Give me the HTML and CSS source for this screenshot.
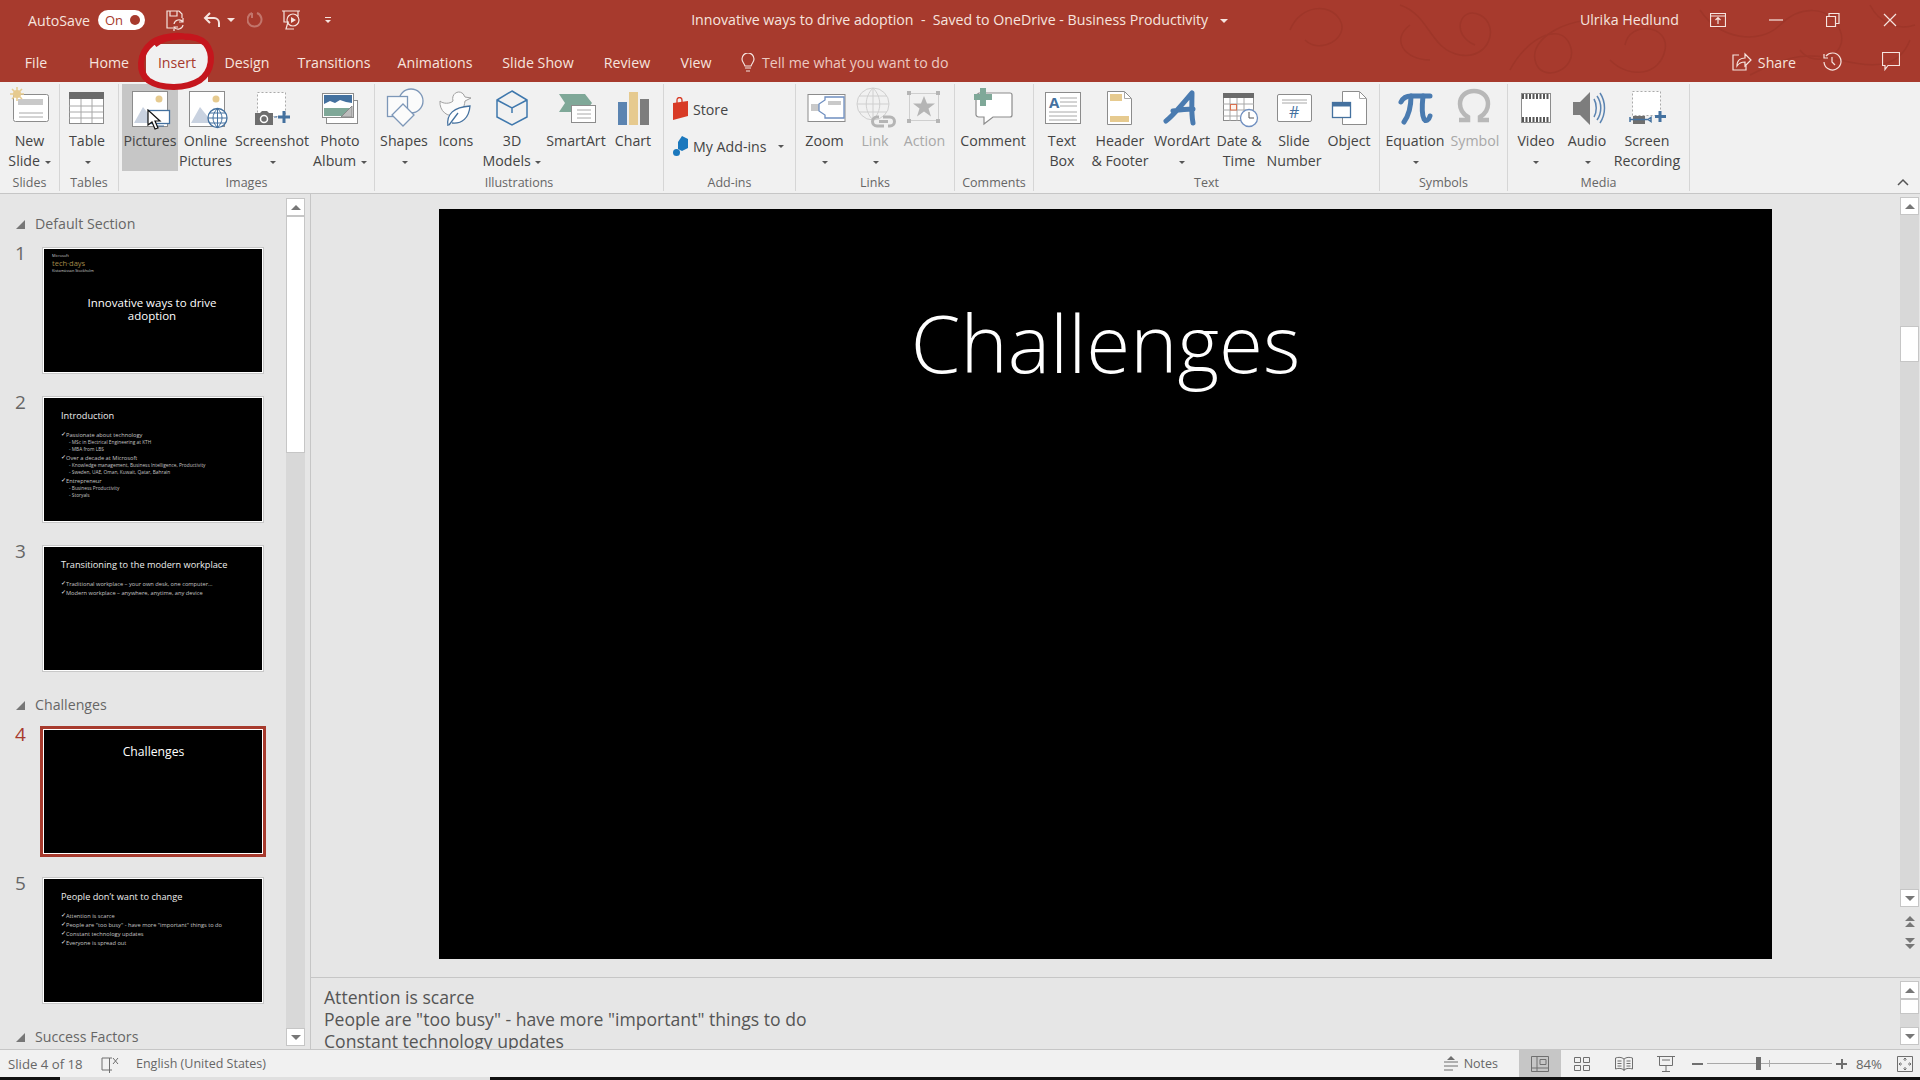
FILE: index.html
```html
<!DOCTYPE html>
<html lang="en">

<head>
  <meta charset="UTF-8" />
  <title>Innovative ways to drive adoption - PowerPoint</title>
  <link rel="stylesheet" href="styles.css">
</head>

<body>
  <header class="titlebar">
    <svg class="pattern" width="640" height="82" viewBox="0 0 640 82">
      <path d="M10 30c10-25 40-28 50-10s-20 35-35 20M120 5c30 10 30 45 60 50s40-30 20-40-30 20-5 30M150 60c-25 0-40-20-20-35M230 70c15-30 50-50 60-25s-30 40-35 15 40-45 75-40M330 60c20 20 50 15 55-10s-35-30-40-5M420 10c20 30 60 35 80 15s50-20 60 5-25 40-40 20M470 75c30-15 50-25 90-15s60 5 70-20M590 5c10 20 30 25 45 20" />
    </svg>
    <div class="title-row">
      <div class="qat">
        <span class="autosave">AutoSave</span>
        <span class="toggle">On<i></i></span>
        <svg class="qat-save" width="20" height="22" viewBox="0 0 20 22"><path d="M14 2H2v17h6M14 2l3 3v4M5 2v5h7V2" /><path d="M9 15a5 5 0 0 1 9-2M18 16a5 5 0 0 1-9 2M18 9v4h-4M9 22v-4h4" /></svg>
        <svg class="qat-undo" width="18" height="18" viewBox="0 0 18 18"><path class="thick" d="M7 2 2 7l5 5M2 7h9a5 5 0 0 1 5 5v4" /></svg>
        <span class="caret-w"></span>
        <svg class="qat-redo" width="16" height="18" viewBox="0 0 16 18"><path class="thick" d="M10 2a7 7 0 1 1-5 0M5 2v5" /></svg>
        <svg class="qat-show" width="20" height="22" viewBox="0 0 20 22"><path d="M1 2h18M3 2v11h5M7 13l-2 7h8M13 2h4v5" /><circle cx="12" cy="11" r="6" /><path class="fill" d="m10 8 5 3-5 3z" /></svg>
        <span class="qat-more"></span>
      </div>
      <div class="doc-title">Innovative ways to drive adoption &nbsp;-&nbsp; Saved to OneDrive - Business Productivity <span class="caret-w"></span></div>
      <div class="win">
        <span class="user">Ulrika Hedlund</span>
        <svg width="16" height="14" viewBox="0 0 16 14"><path d="M.5.5h15v13H.5zM.5 3h15M8 11V5M5.500 7 8 4.500 10.500 7" /></svg>
        <svg width="14" height="14" viewBox="0 0 14 14"><path d="M0 7h14" /></svg>
        <svg width="14" height="14" viewBox="0 0 14 14"><path d="M.5 3.500h9v10h-9zM3 3.500V.5h10v10h-3.500" /></svg>
        <svg width="14" height="14" viewBox="0 0 14 14"><path d="m1 1 12 12M13 1 1 13" /></svg>
      </div>
    </div>
    <nav class="tabs">
      <span class="tab">File</span>
      <span class="tab">Home</span>
      <span class="tab active">Insert</span>
      <span class="tab">Design</span>
      <span class="tab">Transitions</span>
      <span class="tab">Animations</span>
      <span class="tab">Slide Show</span>
      <span class="tab">Review</span>
      <span class="tab">View</span>
      <span class="tell">
        <svg width="14" height="20" viewBox="0 0 14 20"><path d="M4 13C3 10 1 9 1 6a6 6 0 0 1 12 0c0 3-2 4-3 7zM4 15h6M5 18h4" /></svg>
        Tell me what you want to do
      </span>
      <span class="tabs-right">
        <svg width="20" height="20" viewBox="0 0 20 20"><path d="M7 4H1v15h13v-5M5 15c0-6 4-8 8-8V3l6 6-6 6v-4c-3 0-6 1-8 4z" /></svg>
        <span class="share">Share</span>
        <svg class="hist" width="19" height="19" viewBox="0 0 19 19"><path d="M3 4a8.500 8.500 0 1 1-2 6M1 2v4h4M9 5v5l3 3" /></svg>
        <svg class="chat" width="18" height="19" viewBox="0 0 18 19"><path d="M.5.5h17v13H6l-3 4v-4H.5z" /></svg>
      </span>
    </nav>
  </header>

  <section class="ribbon">
    <div class="group g-slides">
      <div class="tools">
        <div class="tool">
          <svg class="icon" viewBox="0 0 44 46"><rect class="sheet" x="5.500" y="10.500" width="35" height="27" rx="2" /><rect class="grey" x="10" y="15" width="25" height="6" /><path class="ln" d="M11 29h24M11 33h24" /><path class="sun" d="M9 3v14M2 10h14M4 5l10 10M14 5 4 15" /><circle class="gold" cx="9" cy="10" r="4" /></svg>
          <span class="label">New<br>Slide <i class="caret"></i></span>
        </div>
      </div>
      <div class="group-name">Slides</div>
    </div>
    <div class="group g-tables">
      <div class="tools">
        <div class="tool">
          <svg class="icon" viewBox="0 0 44 46"><rect class="sheet" x="4.500" y="8.500" width="34" height="31" /><rect class="dark" x="4" y="8" width="35" height="7" /><path class="ln" d="M4 22h34M4 28h34M4 34h34M16 15v24M27 15v24" /></svg>
          <span class="label">Table<br><i class="caret"></i></span>
        </div>
      </div>
      <div class="group-name">Tables</div>
    </div>
    <div class="group g-images">
      <div class="tools">
        <div class="tool pressed">
          <svg class="icon" viewBox="0 0 44 46"><rect class="sheet" x="4.500" y="7.500" width="35" height="35" /><circle class="gold" cx="31" cy="15" r="3.500" /><path class="mount" d="m6 39 9-16 8 10 5 6z" /><rect class="sheet-b" x="20.500" y="26.500" width="21" height="13" /><path class="blue" d="M27 42h9" /></svg>
          <span class="label">Pictures</span>
        </div>
        <div class="tool">
          <svg class="icon" viewBox="0 0 44 46"><rect class="sheet" x="5.500" y="7.500" width="35" height="35" /><circle class="gold" cx="32" cy="15" r="3.500" /><path class="mount" d="m7 39 9-16 8 10 5 6z" /><circle class="sheet-b" cx="33.500" cy="34" r="9.500" /><path class="blue" d="M24 34h19M33.500 24.500v19M25.500 29h16M25.500 39h16M33.500 24.500c-6 6-6 13 0 19M33.500 24.500c6 6 6 13 0 19" /></svg>
          <span class="label">Online<br>Pictures</span>
        </div>
        <div class="tool">
          <svg class="icon" viewBox="0 0 44 46"><rect class="dash" x="7.500" y="8.500" width="28" height="24" /><path class="cam" d="M5 29h5l2-2h5l2 2h4v12H5z" /><circle class="lens" cx="14" cy="35" r="3.500" /><path class="blue-b" d="M34 27v12M28 33h12" /><path class="blue" d="M24 33h3" /></svg>
          <span class="label">Screenshot<br><i class="caret"></i></span>
        </div>
        <div class="tool">
          <svg class="icon" viewBox="0 0 44 46"><rect class="sheet" x="8.500" y="16.500" width="31" height="23" /><rect class="sheet" x="4.500" y="9.500" width="31" height="24" /><rect class="sky" x="6" y="11" width="28" height="14" /><path class="cloud" d="m6 20 6-3 5 2 5-3 6 2 6 1v5H6z" /><rect class="sea" x="6" y="24" width="28" height="8" /><path class="curl" d="M34 22 23 33h11z" /></svg>
          <span class="label">Photo<br>Album <i class="caret"></i></span>
        </div>
      </div>
      <div class="group-name">Images</div>
    </div>
    <div class="group g-illus">
      <div class="tools">
        <div class="tool">
          <svg class="icon" viewBox="0 0 44 46"><circle class="sheet-s" cx="29" cy="17" r="12" /><rect class="sheet-s" x="5.500" y="12.500" width="20" height="20" /><path class="sheet-s" d="m21 20 11 11-11 11-11-11z" /></svg>
          <span class="label">Shapes<br><i class="caret"></i></span>
        </div>
        <div class="tool">
          <svg class="icon" viewBox="0 0 44 46"><path class="sheet-g" d="M6 17c3 3 10 3 13 0-2-7 5-11 9-8 2 1 2 3 3 4l6 1-6 3c-1 7-3 12-9 14-8 3-17-4-16-14z" /><path class="sheet-b" d="M14 42c-2-12 6-19 22-20-1 12-8 18-18 17M24 29l-9 12" /></svg>
          <span class="label">Icons</span>
        </div>
        <div class="tool">
          <svg class="icon" viewBox="0 0 44 46"><path class="cube" d="m22 7 15 9v17l-15 8-15-8V16zM7 16l15 8 15-8M22 24v5" /></svg>
          <span class="label">3D<br>Models <i class="caret"></i></span>
        </div>
        <div class="tool">
          <svg class="icon" viewBox="0 0 44 46"><path class="green" d="M5 10h26l7 9-7 9H5l6-9z" /><rect class="sheet" x="17.500" y="21.500" width="24" height="17" /><path class="ln" d="M23 26h14M23 30h14M23 34h14" /></svg>
          <span class="label">SmartArt</span>
        </div>
        <div class="tool">
          <svg class="icon" viewBox="0 0 44 46"><rect class="bar-b" x="7" y="18" width="9" height="23" /><rect class="gold" x="18" y="8" width="9" height="33" /><rect class="bar-g" x="29" y="15" width="9" height="26" /></svg>
          <span class="label">Chart</span>
        </div>
      </div>
      <div class="group-name">Illustrations</div>
    </div>
    <div class="group g-addins">
      <div class="addins">
        <div class="addin">
          <svg width="17" height="24" viewBox="0 0 17 24"><path class="store" d="m1 6 15-2v15L1 23z" /><path class="store-h" d="M5 7V3a2.500 2.500 0 0 1 5 0v3" /></svg>
          Store
        </div>
        <div class="addin">
          <svg width="17" height="24" viewBox="0 0 17 24"><path class="hex" d="m10 2 6 3v9l-6 3-4-2V8z" /><circle class="hex" cx="4.500" cy="18.500" r="3.500" /></svg>
          My Add-ins <i class="caret"></i>
        </div>
      </div>
      <div class="group-name">Add-ins</div>
    </div>
    <div class="group g-links">
      <div class="tools">
        <div class="tool">
          <svg class="icon" viewBox="0 0 44 46"><rect class="sheet" x="5" y="10.500" width="37" height="27" /><rect class="grey" x="8" y="20" width="8" height="7" /><path class="sheet-bl" d="M16 20l6-4v-3h19v21H22v-3l-6-4z" /><rect class="grey" x="25" y="17" width="13" height="4" /></svg>
          <span class="label">Zoom<br><i class="caret"></i></span>
        </div>
        <div class="tool off">
          <svg class="icon" viewBox="0 0 44 46"><circle class="faint" cx="20" cy="20" r="16" /><path class="faint" d="M4 20h32M20 4v32M6 12h28M6 28h28M20 4c-9 9-9 23 0 32M20 4c9 9 9 23 0 32" /><path class="chain" d="M26 33h-2a4 4 0 0 0 0 9h7M30 33h7a4 4 0 0 1 0 9h-2M26 37.500h9" /></svg>
          <span class="label">Link<br><i class="caret"></i></span>
        </div>
        <div class="tool off">
          <svg class="icon" viewBox="0 0 44 46"><rect class="faint" x="6.500" y="9.500" width="29" height="27" /><path class="star" d="m21 12 3 7.500h8l-6.500 5 2.500 8-7-5-7 5 2.500-8-6.500-5h8z" /><path class="star" d="M4 7h4v4H4zM33 7h4v4h-4zM4 35h4v4H4zM33 35h4v4h-4z" /></svg>
          <span class="label">Action</span>
        </div>
      </div>
      <div class="group-name">Links</div>
    </div>
    <div class="group g-comments">
      <div class="tools">
        <div class="tool">
          <svg class="icon" viewBox="0 0 44 46"><path class="sheet-bub" d="M8 9h31a2 2 0 0 1 2 2v20a2 2 0 0 1-2 2H22l-9 7v-7H8a3 3 0 0 1-3-2V11z" /><path class="plus-g" d="M12 4v18M3 13h18" /></svg>
          <span class="label">Comment</span>
        </div>
      </div>
      <div class="group-name">Comments</div>
    </div>
    <div class="group g-text">
      <div class="tools">
        <div class="tool">
          <svg class="icon" viewBox="0 0 44 46"><rect class="sheet" x="5.500" y="8.500" width="35" height="31" /><text class="ic-a" x="9" y="24">A</text><path class="ln" d="M20 14h17M20 18h17M20 22h17M9 28h28M9 32h28M9 36h28" /></svg>
          <span class="label">Text<br>Box</span>
        </div>
        <div class="tool">
          <svg class="icon" viewBox="0 0 44 46"><path class="sheet" d="M9.500 7.500h17l7 7v26h-24z" /><path class="ln" d="M26.500 7.500v7h7" /><rect class="gold" x="12" y="10" width="12" height="7" /><rect class="gold" x="12" y="32" width="19" height="6" /></svg>
          <span class="label">Header<br>&amp; Footer</span>
        </div>
        <div class="tool">
          <svg class="icon" viewBox="0 0 44 46"><path class="pic-word" d="M6 37c6-4 14-14 26-28 0 10-1 20 1 30M13 27c6-1 13-2 20-2" /></svg>
          <span class="label">WordArt<br><i class="caret"></i></span>
        </div>
        <div class="tool">
          <svg class="icon" viewBox="0 0 44 46"><rect class="sheet" x="6.500" y="9.500" width="30" height="27" /><rect class="dark" x="6" y="9" width="31" height="5" /><path class="ln" d="M6 20h31M6 26h31M6 32h31M13 14v23M20 14v23M27 14v23" /><rect class="redbox" x="13.500" y="20.500" width="6" height="5.500" /><circle class="sheet-bl" cx="32" cy="34" r="8.500" /><path class="dk" d="M32 28v6h5" /></svg>
          <span class="label">Date &amp;<br>Time</span>
        </div>
        <div class="tool">
          <svg class="icon" viewBox="0 0 44 46"><rect class="sheet" x="5.500" y="10.500" width="34" height="27" rx="1.500" /><path class="ln" d="M10 16h25M10 19h25" /><text class="ic-hash" x="17" y="34">#</text></svg>
          <span class="label">Slide<br>Number</span>
        </div>
        <div class="tool">
          <svg class="icon" viewBox="0 0 44 46"><path class="sheet" d="M15.500 7.500h17l7 7v26h-24z" /><path class="ln" d="M32.500 7.500v7h7" /><rect class="win-bl" x="5.500" y="18.500" width="18" height="15" /><path class="win-bar" d="M5 20.500h19" /></svg>
          <span class="label">Object</span>
        </div>
      </div>
      <div class="group-name">Text</div>
    </div>
    <div class="group g-symbols">
      <div class="tools">
        <div class="tool">
          <svg class="icon" viewBox="0 0 44 46"><path class="pic-pi" d="M8 18c2-4 6-6 10-6h19" /><path class="pic-pi" d="M18 12c0 10-2 19-7 26M30 12c-1 9-1 19 1 23 2 3 5 1 6-3" /></svg>
          <span class="label">Equation<br><i class="caret"></i></span>
        </div>
        <div class="tool off">
          <svg class="icon" viewBox="0 0 44 46"><path class="pic-om" d="M6 36h9v-3c-5-3-8-8-8-13 0-8 6-13 14-13s14 5 14 13c0 5-3 10-8 13v3h9" /></svg>
          <span class="label">Symbol</span>
        </div>
      </div>
      <div class="group-name">Symbols</div>
    </div>
    <div class="group g-media">
      <div class="tools">
        <div class="tool">
          <svg class="icon" viewBox="0 0 44 46"><rect class="sheet" x="7.500" y="9.500" width="29" height="29" /><path class="film" d="M8 12.500h28M8 35.500h28" /></svg>
          <span class="label">Video<br><i class="caret"></i></span>
        </div>
        <div class="tool">
          <svg class="icon" viewBox="0 0 44 46"><path class="bar-g" d="M8 18h7l10-10v33L15 31H8z" /><path class="arc" d="M29 15c3 5 3 13 0 18M32 12c5 7 5 17 0 24M35 9c6 9 6 21 0 30" /></svg>
          <span class="label">Audio<br><i class="caret"></i></span>
        </div>
        <div class="tool">
          <svg class="icon" viewBox="0 0 44 46"><rect class="dash" x="7.500" y="7.500" width="28" height="24" /><path class="cam" d="M8 32h12v8H8z" /><path class="blue-c" d="M5 33v5M5 35.500h18l3-2v4l-3-2" /><path class="blue-b" d="M35 27v11M30 32.500h11" /></svg>
          <span class="label">Screen<br>Recording</span>
        </div>
      </div>
      <div class="group-name">Media</div>
    </div>
    <svg class="collapse" width="12" height="8" viewBox="0 0 12 8"><path d="m1 7 5-5 5 5" /></svg>
  </section>

  <!-- the red mark drawn over the Insert tab -->
  <svg class="ring" width="82" height="62" viewBox="0 0 80 60"><path d="M18 13C30 3 58 2 68 12c8 10 7 27-6 36-14 9-38 8-50 0C2 40 2 22 16 11c8-6 26-8 34-5" /></svg>
  <svg class="cursor" width="15" height="21" viewBox="0 0 15 21"><path d="M1 1v15l4-3 3 7 3-1-3-7h5z" /></svg>

  <main class="workspace">
    <aside class="panel">
      <div class="slides-list">
        <div class="sec-head">Default Section</div>
        <div class="sec">
          <div class="row">
            <span class="num">1</span>
            <div class="thumb th-cover">
              <div class="ms">Microsoft</div>
              <div class="td">tech·days</div>
              <div class="ms">Kistamässan Stockholm</div>
              <div class="cover-title">Innovative ways to drive<br>adoption</div>
            </div>
          </div>
          <div class="row">
            <span class="num">2</span>
            <div class="thumb th-list">
              <div class="th-title">Introduction</div>
              <ul class="bl">
                <li>Passionate about technology</li>
                <li class="sub">- MSc in Electrical Engineering at KTH</li>
                <li class="sub">- MBA from LBS</li>
                <li class="next">Over a decade at Microsoft</li>
                <li class="sub">- Knowledge management, Business Intelligence, Productivity</li>
                <li class="sub">- Sweden, UAE, Oman, Kuwait, Qatar, Bahrain</li>
                <li class="next">Entrepreneur</li>
                <li class="sub">- Business Productivity</li>
                <li class="sub">- Storyals</li>
              </ul>
            </div>
          </div>
          <div class="row">
            <span class="num">3</span>
            <div class="thumb th-list">
              <div class="th-title">Transitioning to the modern workplace</div>
              <ul class="bl wide">
                <li>Traditional workplace – your own desk, one computer...</li>
                <li>Modern workplace – anywhere, anytime, any device</li>
              </ul>
            </div>
          </div>
        </div>
        <div class="sec-head">Challenges</div>
        <div class="sec">
          <div class="row current">
            <span class="num">4</span>
            <div class="thumb th-center">Challenges</div>
          </div>
          <div class="row">
            <span class="num">5</span>
            <div class="thumb th-list">
              <div class="th-title">People don’t want to change</div>
              <ul class="bl wide">
                <li>Attention is scarce</li>
                <li>People are "too busy" - have more "important" things to do</li>
                <li>Constant technology updates</li>
                <li>Everyone is spread out</li>
              </ul>
            </div>
          </div>
        </div>
        <div class="sec-head">Success Factors</div>
      </div>
      <div class="sb sb-list">
        <span class="sb-btn up"></span>
        <div class="sb-track"><div class="sb-thumb"></div></div>
        <span class="sb-btn down"></span>
      </div>
    </aside>

    <div class="center">
      <div class="editor">
        <div class="canvas">
          <div class="slide">Challenges</div>
        </div>
        <div class="sb sb-main">
          <span class="sb-btn up"></span>
          <div class="sb-track"><div class="sb-thumb"></div></div>
          <span class="sb-btn down"></span>
          <svg class="dbl" width="12" height="12" viewBox="0 0 12 12"><path d="m6 0 5 5H1zM6 6l5 5H1z" /></svg>
          <svg class="dbl" width="12" height="12" viewBox="0 0 12 12"><path d="m1 1h10L6 6zM1 7h10l-5 5z" /></svg>
        </div>
      </div>
      <div class="notes">
        <div class="notes-text">
          Attention is scarce<br>
          People are "too busy" - have more "important" things to do<br>
          Constant technology updates
        </div>
        <div class="sb sb-notes">
          <span class="sb-btn up"></span>
          <div class="sb-track"><div class="sb-thumb"></div></div>
          <span class="sb-btn down"></span>
        </div>
      </div>
    </div>
  </main>

  <footer class="status">
    <span class="st-slide">Slide 4 of 18</span>
    <svg class="st-book" width="18" height="18" viewBox="0 0 18 18"><path d="M8.500 3H1v12h7.500zM8.500 3v15M8.500 15H11M8.500 3H11M12 3l5 6M17 3l-5 6" /></svg>
    <span class="st-lang">English (United States)</span>
    <span class="st-right">
      <svg class="st-notes" width="14" height="15" viewBox="0 0 14 15"><path class="st-f" d="m7 0 4 4H3z" /><path d="M0 6h14M0 10h14M0 14h9" /></svg>
      <span class="st-notes-t">Notes</span>
      <span class="view on"><svg width="18" height="16" viewBox="0 0 18 16"><path d="M.5.5h17v15H.5zM6 .5v15M.5 12h17M9 3.500h6v5H9z" /></svg></span>
      <span class="view"><svg width="18" height="16" viewBox="0 0 18 16"><path d="M1.500 1.500h6v5h-6zM10.500 1.500h6v5h-6zM1.500 9.500h6v5h-6zM10.500 9.500h6v5h-6z" /></svg></span>
      <span class="view"><svg width="18" height="16" viewBox="0 0 18 16"><path d="M.5 2c3-1 6-1 8.500 1 2.500-2 5.500-2 8.500-1v11c-3-1-6-1-8.500 1-2.500-2-5.500-2-8.500-1zM9 3v12M2.500 5h4M2.500 7.500h4M2.500 10h4M11.500 5h4M11.500 7.500h4M11.500 10h4" /></svg></span>
      <span class="view"><svg width="18" height="16" viewBox="0 0 18 16"><path d="M0 .5h18M2.500.5v9h13v-9M9 9.500V15M5 15.500h8M5 4h8" /></svg></span>
      <span class="zoom-minus"></span>
      <span class="slider"><i class="tick"></i><i class="knob"></i></span>
      <span class="zoom-plus"></span>
      <span class="st-pct">84%</span>
      <svg class="st-fit" width="16" height="16" viewBox="0 0 16 16"><path d="M.5.5h15v15H.5zM8 2v3M8 11v3M2 8h3M11 8h3M6.500 3.500 8 2l1.500 1.500M6.500 12.500 8 14l1.500-1.500M3.500 6.500 2 8l1.500 1.500M12.500 6.500 14 8l-1.500 1.500" /></svg>
    </span>
  </footer>
  <div class="strip"><i class="strip-a"></i><i class="strip-b"></i><i class="strip-c"></i></div>
</body>

</html>
```

FILE: styles.css
```css
* {
  box-sizing: border-box;
  margin: 0;
  padding: 0;
}

body {
  width: 1920px;
  height: 1080px;
  overflow: hidden;
  position: relative;
  background: #e6e6e6;
  font-family: "Open Sans", "Liberation Sans", sans-serif;
  color: #444;
}

svg {
  fill: none;
  stroke: none;
}

/* Title bar */
.titlebar {
  position: relative;
  height: 82px;
  background: #a73a2d;
  color: #f6e4df;
  font-size: 14.2px;
}

.pattern {
  position: absolute;
  top: 0;
  right: 0;
}

.pattern path {
  stroke: #9e3629;
  stroke-width: 1.5;
}

.title-row {
  position: relative;
  display: grid;
  grid-template-columns: 560px 1fr 564px;
  height: 40px;
  align-items: center;
}

.qat {
  display: flex;
  align-items: center;
  padding-left: 28px;
}

.qat svg path,
.qat svg circle,
.win svg path,
.tabs svg path {
  stroke: #f6e4df;
  stroke-width: 1.2;
}

.qat svg .thick {
  stroke-width: 2;
}

.qat svg .fill {
  fill: #f6e4df;
  stroke: none;
}

.autosave {
  width: 70px;
}

.toggle {
  display: flex;
  align-items: center;
  justify-content: space-between;
  width: 47px;
  height: 20px;
  padding: 0 5px 0 7px;
  border-radius: 10px;
  background: #fff;
  color: #a73a2d;
  font-size: 13px;
}

.toggle i {
  width: 10px;
  height: 10px;
  border-radius: 50%;
  background: #a73a2d;
}

.qat-save {
  margin-left: 20px;
}

.qat-undo {
  margin-left: 18px;
}

.qat .caret-w {
  margin-left: 6px;
}

.qat-redo {
  margin-left: 12px;
  opacity: 0.35;
}

.qat-show {
  margin-left: 18px;
}

.qat-more {
  width: 6px;
  height: 6px;
  margin-left: 24px;
  border-top: 1px solid #f6e4df;
  position: relative;
}

.qat-more::after {
  content: "";
  position: absolute;
  top: 2px;
  left: 0;
  border: 3px solid transparent;
  border-top-color: #f6e4df;
}

.caret-w {
  display: inline-block;
  border: 4px solid transparent;
  border-top-color: #f6e4df;
  border-bottom: none;
  vertical-align: middle;
  margin-left: 8px;
}

.doc-title {
  margin-top: -2px;
  padding-left: 3px;
  text-align: center;
  white-space: nowrap;
}

.win {
  display: flex;
  align-items: center;
  justify-content: flex-end;
  margin-top: -1px;
  padding-right: 23px;
  gap: 43px;
}

.win .user {
  margin-right: -12px;
}

.tabs {
  position: relative;
  display: grid;
  grid-template-columns: 72px 74px 62px 78px 96px 106px 100px 78px 60px auto 1fr;
  height: 42px;
  align-items: start;
  text-align: center;
}

.tab {
  line-height: 45px;
}

.tab.active {
  height: 38px;
  line-height: 37px;
  margin-top: 4px;
  background: #f1f1f1;
  color: #a73a2d;
}

.tell {
  display: flex;
  align-items: center;
  gap: 7px;
  height: 45px;
  margin-left: 15px;
  color: #edc9c1;
}

.tabs-right {
  display: flex;
  align-items: center;
  justify-content: flex-end;
  height: 42px;
  padding-right: 20px;
}

.share {
  margin: 0 27px 0 6px;
  padding-top: 3px;
}

.chat {
  margin-left: 40px;
}

/* Ribbon */
.ribbon {
  position: relative;
  display: flex;
  height: 112px;
  padding-top: 2px;
  background: #f1f1f1;
  border-bottom: 1px solid #c6c6c6;
  font-size: 14.2px;
}

.group {
  display: flex;
  flex-direction: column;
  height: 107px;
  padding-left: 3px;
  border-right: 1px solid #d6d6d6;
}

.group-name {
  height: 17px;
  margin-top: auto;
  margin-left: -3px;
  text-align: center;
  font-size: 12.5px;
  line-height: 17px;
  color: #666;
}

.tools {
  display: grid;
  height: 86px;
}

.g-slides { width: 60px; padding-left: 0; }
.g-slides .tools { grid-template-columns: 59px; }
.g-slides .group-name { margin-left: 0; }
.g-tables { width: 59px; }
.g-tables .tools { grid-template-columns: 48px; }
.g-images { width: 256px; }
.g-images .tools { grid-template-columns: 56px 55px 78px 58px; }
.g-illus { width: 289px; }
.g-illus .tools { grid-template-columns: 52px 52px 60px 68px 46px; }
.g-addins { width: 132px; }
.g-links { width: 159px; }
.g-links .tools { grid-template-columns: 51px 50px 49px; }
.g-comments { width: 79px; }
.g-comments .tools { grid-template-columns: 70px; }
.g-text { width: 346px; }
.g-text .tools { grid-template-columns: 50px 66px 58px 56px 54px 56px; }
.g-symbols { width: 128px; }
.g-symbols .tools { grid-template-columns: 64px 56px; }
.g-media { width: 182px; }
.g-media .tools { grid-template-columns: 50px 52px 68px; }

.tool {
  display: flex;
  flex-direction: column;
  align-items: center;
  min-width: 0;
}

.tool.pressed {
  background: #c6c6c6;
}

.tool.off .label {
  color: #a8a8a8;
}

.icon {
  width: 44px;
  height: 46px;
  flex: none;
}

.label {
  padding-top: 1px;
  text-align: center;
  white-space: nowrap;
  line-height: 20px;
}

.caret {
  display: inline-block;
  border: 3.500px solid transparent;
  border-top-color: #555;
  border-bottom: none;
  vertical-align: middle;
  margin-left: 1px;
}

.collapse {
  position: absolute;
  top: 96px;
  right: 11px;
}

.collapse path {
  stroke: #555;
  stroke-width: 1.500;
}

.addins {
  display: flex;
  flex-direction: column;
  gap: 13px;
  padding: 13px 0 0 5px;
  height: 86px;
}

.addin {
  display: flex;
  align-items: center;
  gap: 4px;
  height: 24px;
  white-space: nowrap;
}

.addin .caret {
  margin-left: 7px;
}

/* icon paints */
.sheet { fill: #fff; stroke: #8c8c8c; }
.sheet-s { fill: #fbfbfb; stroke: #7d97b8; stroke-width: 1.3; }
.sheet-g { fill: #fbfbfb; stroke: #a0a0a0; }
.sheet-b { fill: #fff; stroke: #44719f; stroke-width: 1.3; }
.sheet-bl { fill: #fff; stroke: #6f8fc0; stroke-width: 1.3; }
.sheet-bub { fill: #fff; stroke: #8c8c8c; stroke-width: 1.2; }
.grey { fill: #c9c9c9; }
.dark { fill: #6b6b6b; }
.ln { stroke: #a8a8a8; }
.gold { fill: #e6ca8f; }
.sun { stroke: #e6ca8f; stroke-width: 1.5; }
.mount { fill: #c9d2e0; }
.blue { stroke: #44719f; }
.blue-b { stroke: #44719f; stroke-width: 3; }
.blue-c { stroke: #44719f; stroke-width: 1.5; }
.dash { fill: #fff; stroke: #aaa; stroke-dasharray: 2 2; }
.cam { fill: #6e6e6e; }
.lens { fill: #6e6e6e; stroke: #fff; stroke-width: 1.5; }
.sky { fill: #44719f; }
.cloud { fill: #fff; }
.sea { fill: #7fa898; }
.curl { fill: #bdbdbd; stroke: #888; }
.cube { stroke: #3f78ad; stroke-width: 1.5; }
.green { fill: #7fa898; }
.bar-b { fill: #5b84b1; }
.bar-g { fill: #7d7d7d; }
.store { fill: #d83b26; }
.store-h { stroke: #d83b26; stroke-width: 1.3; }
.hex { fill: #1b78bd; }
.faint { stroke: #cfcfcf; }
.chain { stroke: #b5b5b5; stroke-width: 3; }
.star { fill: #b5b5b5; }
.plus-g { stroke: #7fa898; stroke-width: 6; }
.redbox { fill: #fdf3ec; stroke: #d9704f; }
.dk { stroke: #555; }
.win-bl { fill: #fff; stroke: #44719f; stroke-width: 1.300; }
.win-bar { stroke: #44719f; stroke-width: 4; }
.film { stroke: #555; stroke-width: 5; stroke-dasharray: 2 1.500; }
.arc { stroke: #5b84b1; stroke-width: 1.500; }
.pic-word { stroke: #4a7bb0; stroke-width: 5; stroke-linecap: round; stroke-linejoin: round; }
.pic-pi { stroke: #4a7bb0; stroke-width: 5; stroke-linecap: round; }
.pic-om { stroke: #b8b8b8; stroke-width: 4.5; }

.ic-a {
  fill: #44719f;
  font: 700 15px "Open Sans", sans-serif;
}

.ic-hash {
  fill: #44719f;
  font: 400 16px "Open Sans", sans-serif;
}

/* overlays */
.ring {
  position: absolute;
  top: 31px;
  left: 136px;
}

.ring path {
  stroke: #c5161d;
  stroke-width: 6;
}

.cursor {
  position: absolute;
  top: 109px;
  left: 147px;
}

.cursor path {
  fill: #fff;
  stroke: #111;
  stroke-width: 1.200;
}

/* Main area */
.workspace {
  display: flex;
  height: 855px;
}

.panel {
  display: flex;
  flex: none;
  width: 311px;
  padding-right: 5px;
  border-right: 1px solid #c6c6c6;
}

.slides-list {
  width: 286px;
  height: 855px;
  padding-top: 18px;
  overflow: hidden;
}

.sec-head {
  position: relative;
  height: 24px;
  padding-left: 35px;
  margin-bottom: 13px;
  font-size: 14.2px;
  line-height: 24px;
  color: #666;
}

.sec-head::before {
  content: "";
  position: absolute;
  left: 16px;
  top: 8px;
  border-style: solid;
  border-width: 0 0 9px 9px;
  border-color: transparent transparent #777 transparent;
}

.sec {
  display: flex;
  flex-direction: column;
  gap: 26px;
  margin-bottom: 23px;
}

.row {
  display: flex;
}

.num {
  width: 44px;
  margin-top: -6px;
  padding-left: 15px;
  font-size: 19px;
  line-height: 20px;
  color: #666;
}

.row.current .num {
  color: #a73a2d;
}

.thumb {
  width: 218px;
  height: 123px;
  background: #000;
  color: #eee;
  box-shadow: 0 0 0 1px #fff, 0 0 0 2px #c8c8c8;
  overflow: hidden;
}

.row.current .thumb {
  box-shadow: 0 0 0 1px #fff, 0 0 0 4px #a73a2d;
}

.th-cover {
  padding: 4px 0 0 8px;
}

.ms {
  font-size: 3.800px;
  line-height: 5px;
  color: #ccc;
}

.td {
  font-size: 7.500px;
  line-height: 10px;
  color: #a08a4a;
}

.cover-title {
  margin: 23px 0 0 -10px;
  text-align: center;
  font-size: 11.500px;
  line-height: 13px;
  color: #fff;
}

.th-list {
  padding: 11px 0 0 17px;
}

.th-title {
  font-size: 9.200px;
  line-height: 14px;
  white-space: nowrap;
}

.bl {
  list-style: none;
  margin-top: 9px;
  font-size: 5.700px;
  line-height: 7px;
  color: #c4c4c4;
  white-space: nowrap;
}

.bl li {
  position: relative;
  padding-left: 5px;
}

.bl li::before {
  content: "✓";
  position: absolute;
  left: 0;
  top: -1px;
  color: #fff;
}

.bl li.next {
  margin-top: 2px;
}

.bl li.sub {
  padding-left: 8px;
  font-size: 4.800px;
}

.bl li.sub::before {
  content: none;
}

.bl.wide {
  line-height: 9px;
  margin-top: 8px;
}

.th-center {
  padding-top: 14px;
  padding-left: 1px;
  text-align: center;
  font-size: 12.200px;
  line-height: 16px;
  color: #fff;
}

.sb {
  display: flex;
  flex-direction: column;
  flex: none;
  width: 19px;
}

.sb-btn {
  display: flex;
  align-items: center;
  justify-content: center;
  flex: none;
  height: 18px;
  background: #fff;
  border: 1px solid #c6c6c6;
}

.sb-btn::after {
  content: "";
  border-style: solid;
  border-color: transparent;
  border-width: 5px 5px 0;
  border-top-color: #777;
}

.sb-btn.up::after {
  border-width: 0 5px 5px;
  border-top-color: transparent;
  border-bottom-color: #777;
}

.sb-track {
  flex: 1;
  background: #d8d8d8;
}

.sb-thumb {
  background: #fff;
  border: 1px solid #c6c6c6;
}

.sb-list {
  padding: 4px 0 3px;
}

.sb-list .sb-thumb {
  height: 237px;
}

.center {
  display: flex;
  flex-direction: column;
  flex: 1;
  min-width: 0;
}

.editor {
  display: flex;
  height: 783px;
  flex: none;
}

.canvas {
  display: flex;
  justify-content: center;
  flex: 1;
  padding-top: 15px;
}

.slide {
  width: 1333px;
  height: 750px;
  padding-top: 88px;
  background: #000;
  color: #fff;
  text-align: center;
  font-size: 80px;
  font-weight: 300;
  line-height: 90px;
}

.sb-main {
  margin-right: 1px;
  padding: 3px 0 28px;
}

.sb-main .sb-thumb {
  height: 36px;
  margin-top: 111px;
}

.dbl {
  flex: none;
  align-self: center;
  margin-top: 9px;
  fill: #777;
}

.dbl path {
  fill: #777;
}

.notes {
  display: flex;
  flex: 1;
  min-height: 0;
  border-top: 1px solid #c6c6c6;
}

.notes-text {
  flex: 1;
  height: 71px;
  padding: 8px 0 0 13px;
  overflow: hidden;
  font-size: 17.6px;
  line-height: 22px;
  color: #555;
  white-space: nowrap;
}

.sb-notes {
  margin-right: 1px;
  padding: 3px 0 4px;
}

.sb-notes .sb-thumb {
  height: 15px;
}

/* Status bar */
.status {
  display: flex;
  align-items: center;
  height: 28px;
  background: #f1f1f1;
  border-top: 1px solid #c6c6c6;
  font-size: 13.2px;
  color: #666;
  white-space: nowrap;
}

.status svg path {
  stroke: #6f6f6f;
}

.status svg .st-f {
  fill: #6f6f6f;
  stroke: none;
}

.st-slide {
  margin-left: 8px;
  width: 93px;
}

.st-book {
  margin-right: 17px;
}

.st-lang,
.st-notes-t {
  font-size: 12.5px;
}

.st-right {
  display: flex;
  align-items: center;
  margin-left: auto;
  height: 27px;
}

.st-notes-t {
  margin: 0 21px 0 6px;
}

.view {
  display: flex;
  align-items: center;
  justify-content: center;
  width: 42px;
  height: 27px;
}

.view.on {
  background: #c6c6c6;
}

.zoom-minus,
.zoom-plus {
  width: 11px;
  height: 2px;
  background: #6f6f6f;
  position: relative;
}

.zoom-minus {
  margin-left: 5px;
}

.zoom-plus::after {
  content: "";
  position: absolute;
  top: -4px;
  left: 4.500px;
  width: 2px;
  height: 10px;
  background: #6f6f6f;
}

.slider {
  position: relative;
  width: 125px;
  height: 1px;
  margin: 0 4px;
  background: #a8a8a8;
}

.knob {
  position: absolute;
  top: -6px;
  left: 49px;
  width: 5px;
  height: 13px;
  background: #6f6f6f;
}

.tick {
  position: absolute;
  top: -3px;
  left: 62px;
  width: 1px;
  height: 7px;
  background: #a8a8a8;
}

.st-pct {
  margin-left: 9px;
}

.st-fit {
  margin: 0 7px 0 15px;
}

.strip {
  display: flex;
  height: 3px;
}

.strip i {
  display: block;
}

.strip-a {
  width: 60px;
  background: #111;
}

.strip-b {
  width: 430px;
  background: #e0e0e0;
}

.strip-c {
  flex: 1;
  background: #111;
}
```
